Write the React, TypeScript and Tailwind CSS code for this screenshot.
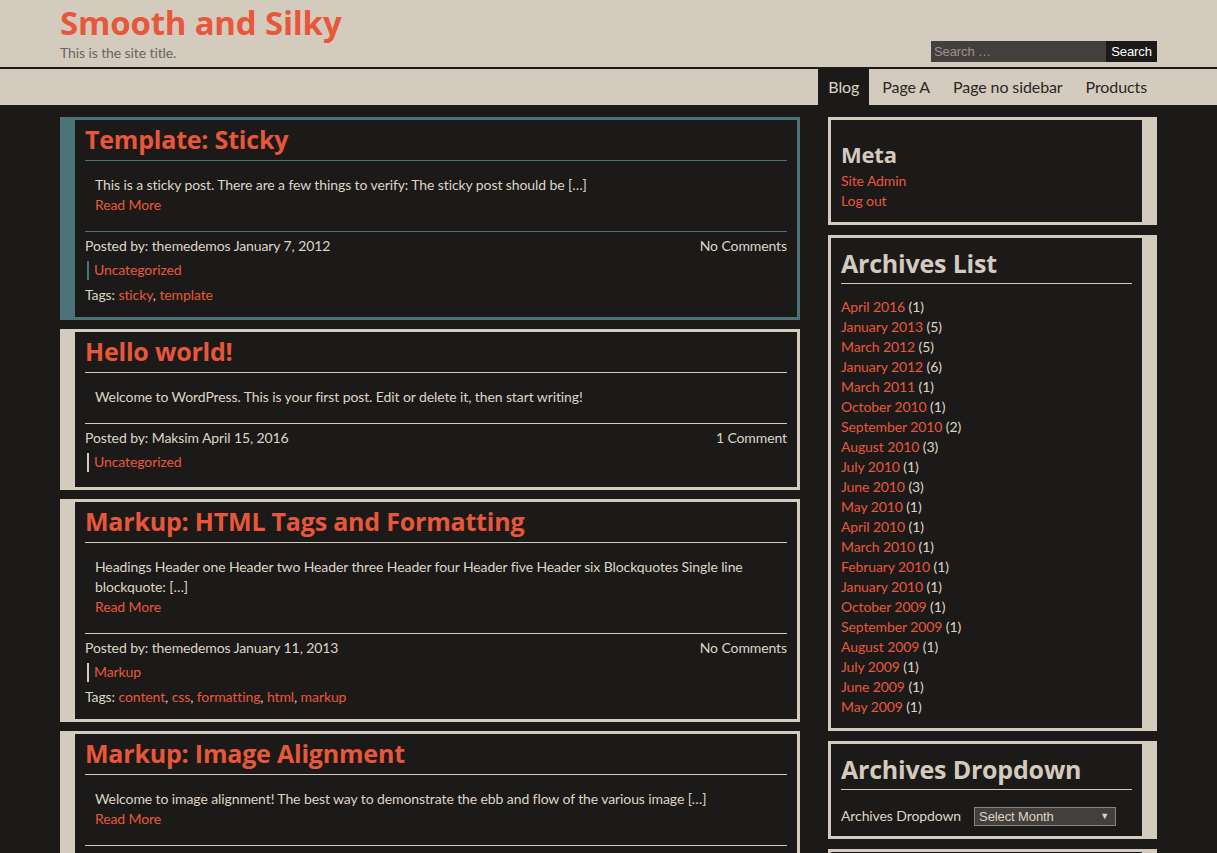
import React from 'react';

type Post = {
  title: string;
  excerpt: string;
  readMore: boolean;
  author: string;
  date: string;
  comments: string;
  category: string;
  tags: string[];
  sticky?: boolean;
};

const posts: Post[] = [
  {
    title: 'Template: Sticky',
    excerpt: 'This is a sticky post. There are a few things to verify: The sticky post should be [\u2026]',
    readMore: true,
    author: 'themedemos',
    date: 'January 7, 2012',
    comments: 'No Comments',
    category: 'Uncategorized',
    tags: ['sticky', 'template'],
    sticky: true,
  },
  {
    title: 'Hello world!',
    excerpt: 'Welcome to WordPress. This is your first post. Edit or delete it, then start writing!',
    readMore: false,
    author: 'Maksim',
    date: 'April 15, 2016',
    comments: '1 Comment',
    category: 'Uncategorized',
    tags: [],
  },
  {
    title: 'Markup: HTML Tags and Formatting',
    excerpt:
      'Headings Header one Header two Header three Header four Header five Header six Blockquotes Single line blockquote: [\u2026]',
    readMore: true,
    author: 'themedemos',
    date: 'January 11, 2013',
    comments: 'No Comments',
    category: 'Markup',
    tags: ['content', 'css', 'formatting', 'html', 'markup'],
  },
  {
    title: 'Markup: Image Alignment',
    excerpt: 'Welcome to image alignment! The best way to demonstrate the ebb and flow of the various image [\u2026]',
    readMore: true,
    author: 'themedemos',
    date: 'January 10, 2013',
    comments: 'No Comments',
    category: 'Markup',
    tags: ['alignment', 'captions', 'content', 'css', 'image', 'markup'],
  },
];

const archives: [string, number][] = [
  ['April 2016', 1],
  ['January 2013', 5],
  ['March 2012', 5],
  ['January 2012', 6],
  ['March 2011', 1],
  ['October 2010', 1],
  ['September 2010', 2],
  ['August 2010', 3],
  ['July 2010', 1],
  ['June 2010', 3],
  ['May 2010', 1],
  ['April 2010', 1],
  ['March 2010', 1],
  ['February 2010', 1],
  ['January 2010', 1],
  ['October 2009', 1],
  ['September 2009', 1],
  ['August 2009', 1],
  ['July 2009', 1],
  ['June 2009', 1],
  ['May 2009', 1],
];

const navItems = ['Blog', 'Page A', 'Page no sidebar', 'Products'];

function PostCard({ post }: { post: Post }) {
  const outer = post.sticky ? 'bg-[#4b7276]' : 'bg-[#d3cbbd]';
  const line = post.sticky ? 'border-[#4b7276]' : 'border-[#d3cbbd]';
  const bar = post.sticky ? 'bg-[#4b7276]' : 'bg-[#d3cbbd]';

  return (
    <article className={`${outer} pt-[3px] pr-[3px] pb-[3px] pl-[15px]`}>
      <div className="bg-[#1c1a19] px-[10px] pb-[12px]">
        <h2 className={`heading pt-[1px] pb-[3px] text-[25px] leading-[36px] font-bold text-[#e8573a] border-b ${line}`}>
          {post.title}
        </h2>

        <div className="pt-[14px] px-[10px]">
          <p>{post.excerpt}</p>
          {post.readMore && <a className="block text-[#e8573a]">Read More</a>}
        </div>

        {/* footer meta */}
        <div className={`mt-[16px] border-t ${line} pt-[4px]`}>
          <div className="flex justify-between">
            <span>
              Posted by: {post.author} {post.date}
            </span>
            <span>{post.comments}</span>
          </div>
          <div className={`mt-[4px] flex items-center ${post.tags.length === 0 ? 'mb-[3px]' : ''}`}>
            <span className={`ml-[2px] w-[2px] h-[19px] ${bar}`} />
            <a className="ml-[5px] text-[#e8573a]">{post.category}</a>
          </div>
          {post.tags.length > 0 && (
            <div className="mt-[5px]">
              Tags:{' '}
              {post.tags.map((t, i) => (
                <React.Fragment key={t}>
                  <a className="text-[#e8573a]">{t}</a>
                  {i < post.tags.length - 1 ? ', ' : ''}
                </React.Fragment>
              ))}
            </div>
          )}
        </div>
      </div>
    </article>
  );
}

function Widget({ children }: { children: React.ReactNode }) {
  return (
    <section className="bg-[#d3cbbd] pt-[3px] pb-[3px] pl-[3px] pr-[15px]">
      <div className="bg-[#1c1a19] px-[10px]">{children}</div>
    </section>
  );
}

export default function App() {
  return (
    <div
      className="min-h-screen bg-[#1c1a19] text-[14px] leading-[20px] text-[#ddd5c6]"
      style={{ fontFamily: 'Lato, "Open Sans", sans-serif', letterSpacing: '-0.1px' }}
    >
      <style>{`.heading{font-family:"Open Sans",Lato,sans-serif;letter-spacing:-0.2px}`}</style>

      {/* header */}
      <header className="bg-[#d3cbbd] h-[67px]">
        <div className="mx-auto w-[1097px] h-full flex justify-between">
          <div className="pt-[4px]">
            <h1 className="heading text-[33px] leading-[38px] font-bold text-[#e8573a]">Smooth and Silky</h1>
            <p className="mt-[3px] text-[14px] leading-[16px] text-[#6a655f]">This is the site title.</p>
          </div>
          <form className="self-end mb-[5px] flex h-[21px]" style={{ fontFamily: '"Liberation Sans", Arial, sans-serif' }}>
            <input
              placeholder="Search …"
              className="w-[175px] h-full bg-[#433f3d] px-[3px] text-[13px] text-white placeholder:text-[#9a948d] outline-none"
            />
            <button type="button" className="w-[51px] h-full bg-[#1c1a19] text-[13px] text-white">
              Search
            </button>
          </form>
        </div>
      </header>
      <div className="h-[2px] bg-[#1c1a19]" />

      {/* nav */}
      <nav className="bg-[#d3cbbd] h-[36px]">
        <ul className="mx-auto w-[1097px] h-full flex justify-end">
          {navItems.map((item, i) => (
            <li
              key={item}
              className={`h-full flex items-center px-[10px] text-[16px] ${
                i === 0 ? 'bg-[#1c1a19] text-[#ddd5c6]' : 'text-[#2b2725] ml-[3px]'
              }`}
            >
              {item}
            </li>
          ))}
        </ul>
      </nav>

      {/* main */}
      <main className="mx-auto w-[1097px] pt-[12px] flex justify-between items-start">
        <div className="w-[740px] flex flex-col gap-[9px]">
          {posts.map(p => (
            <PostCard key={p.title} post={p} />
          ))}
        </div>

        <aside className="w-[329px] flex flex-col gap-[10px]">
          <Widget>
            <h3 className="heading pt-[19px] mb-[2px] text-[22px] leading-[30px] font-bold text-[#d3cbbd]">Meta</h3>
            <ul className="pb-[11px]">
              <li>
                <a className="text-[#e8573a]">Site Admin</a>
              </li>
              <li>
                <a className="text-[#e8573a]">Log out</a>
              </li>
            </ul>
          </Widget>

          <Widget>
            <h3 className="heading pt-[10px] pb-[5px] text-[25px] leading-[30px] font-bold text-[#d3cbbd] border-b border-[#d3cbbd]">
              Archives List
            </h3>
            <ul className="pt-[13px] pb-[11px]">
              {archives.map(([m, n]) => (
                <li key={m}>
                  <a className="text-[#e8573a]">{m}</a> ({n})
                </li>
              ))}
            </ul>
          </Widget>

          <Widget>
            <h3 className="heading pt-[10px] pb-[5px] text-[25px] leading-[30px] font-bold text-[#d3cbbd] border-b border-[#d3cbbd]">
              Archives Dropdown
            </h3>
            <div className="pt-[16px] pb-[10px] flex items-center gap-[13px]">
              <span>Archives Dropdown</span>
              <div
                className="relative w-[142px] h-[19px] border border-[#8a847c] bg-[#433f3d] text-[13px] leading-[17px] text-[#ddd5c6] pl-[4px]"
                style={{ fontFamily: '"Liberation Sans", Arial, sans-serif' }}
              >
                Select Month
                <span className="absolute right-[6px] top-0 text-[9px]">▼</span>
              </div>
            </div>
          </Widget>

          <Widget>
            <h3 className="heading pt-[10px] pb-[5px] text-[25px] leading-[30px] font-bold text-[#d3cbbd] border-b border-[#d3cbbd]">
              Categories
            </h3>
            <ul className="pt-[13px] pb-[11px]">
              <li>
                <a className="text-[#e8573a]">Markup</a> (4)
              </li>
            </ul>
          </Widget>
        </aside>
      </main>
    </div>
  );
}
